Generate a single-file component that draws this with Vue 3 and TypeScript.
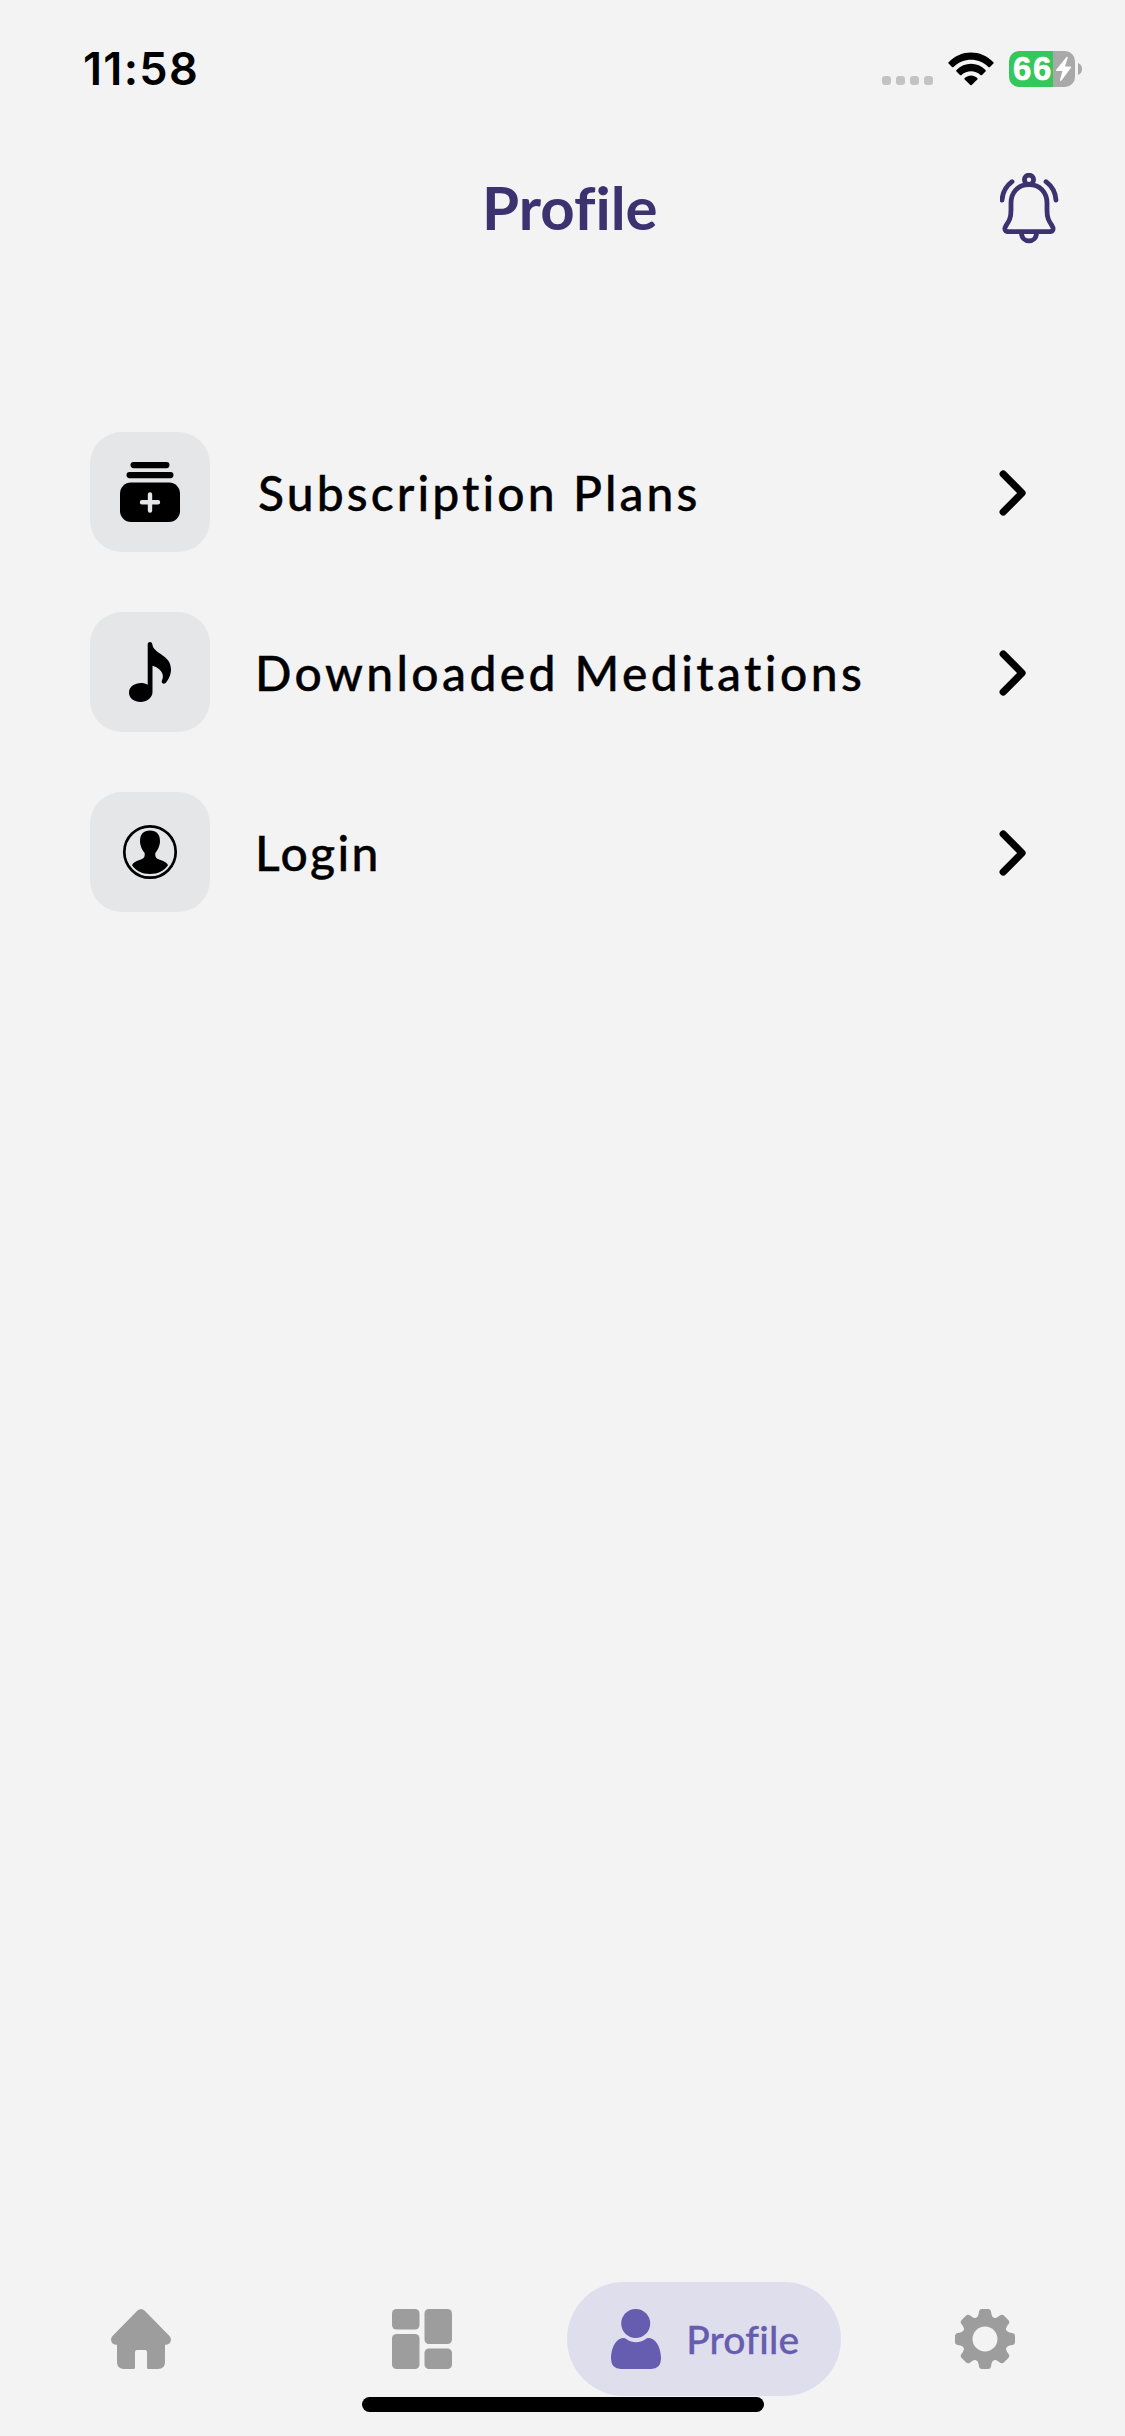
<script setup lang="ts">
interface MenuItem {
  id: 'plans' | 'downloads' | 'login'
  label: string
}

const menu: MenuItem[] = [
  { id: 'plans', label: 'Subscription Plans' },
  { id: 'downloads', label: 'Downloaded Meditations' },
  { id: 'login', label: 'Login' },
]
</script>

<template>
  <div class="screen">
    <header class="status">
      <span class="time">11:58</span>
      <div class="indicators">
        <div class="dots"><i v-for="n in 4" :key="n"></i></div>
        <svg class="wifi" width="46" height="34" viewBox="0 0 46 34">
          <path d="M0.6 10.2C13 -2.8 33 -2.8 45.4 10.2Q46 11 45.4 11.6L42 15Q41.2 15.7 40.4 15C30.5 5.4 15.5 5.4 5.6 15Q4.8 15.7 4 15L0.6 11.6Q0 11 0.6 10.2Z" />
          <path d="M8.5 18C16.5 9.8 29.5 9.8 37.5 18Q38.2 18.8 37.5 19.5L34 23Q33.3 23.6 32.5 23C27 18 19 18 13.5 23Q12.7 23.6 12 23L8.5 19.5Q7.8 18.8 8.5 18Z" />
          <path d="M16.7 26C20.3 22.6 25.7 22.6 29.3 26Q30 26.8 29.3 27.5L23.7 33Q23 33.6 22.3 33L16.7 27.5Q16 26.8 16.7 26Z" />
        </svg>
        <div class="battery">
          <div class="cell">
            <span>66</span>
            <svg width="17" height="26" viewBox="0 0 17 26"><path d="M11.5 1L1 14Q0.5 15 1.5 15H7.5L5 24Q5 25.6 6.5 24.6L16 11.7Q16.5 10.5 15.3 10.5H10L12.7 2Q12.8 0.3 11.5 1Z" fill="#fff" /></svg>
          </div>
          <svg class="nub" width="4" height="12" viewBox="0 0 4 12"><path d="M0 0Q4 1.5 4 6T0 12Z" fill="#a9a9a9" /></svg>
        </div>
      </div>
    </header>

    <div class="titlebar">
      <h1>Profile</h1>
      <svg class="bell" width="60" height="72" viewBox="0.5 0.8 60 72" fill="none" stroke="#3c3270" stroke-width="4.8" stroke-linecap="round" stroke-linejoin="round">
        <circle cx="29.5" cy="7.5" r="4.6" />
        <path d="M29.5 12.5C18.5 12.5 11.5 20 11.5 31V38C11.5 46 9.5 49 6.5 53.5C4 57.5 6 59.5 9.5 59.5H49.5C53 59.5 55 57.5 52.5 53.5C49.5 49 47.5 46 47.5 38V31C47.5 20 40.5 12.5 29.5 12.5Z" />
        <path d="M22 60.5C22 71.5 37 71.5 37 60.5M12.5 9.5C6.5 14 3 20.5 2.5 28M46.5 9.5C52.5 14 56 20.5 56.5 28" />
      </svg>
    </div>

    <main class="menu">
      <div v-for="item in menu" :key="item.id" class="row">
        <div class="tile">
          <svg v-if="item.id === 'plans'" width="60" height="60" viewBox="0 0 60 60">
            <rect x="10.5" y="0" width="39" height="6.2" rx="3.1" />
            <rect x="6.5" y="10" width="47" height="6.2" rx="3.1" />
            <rect x="0" y="20.5" width="60" height="39.5" rx="11" />
            <path d="M30 32.5V48.5M22 40.2H38" stroke="#e4e6e8" stroke-width="4.4" stroke-linecap="round" />
          </svg>
          <svg v-else-if="item.id === 'downloads'" width="60" height="60" viewBox="0 0 60 60">
            <path d="M27.7 2.2C27.7 -0.7 32.2 -0.7 32.3 2.2C33.5 12.5 51 12 51 27.5C51 33.5 48 38.5 45.3 41.3C43 42.6 40.7 40.6 42.2 37.7C45 31 39 25.5 32.5 23.7V50C32.5 56 26.5 60 20.5 60C14.5 60 9 56.5 9 50.5C9 44.5 15 41 21 41C23.5 41 26 41.7 27.7 42.7Z" />
          </svg>
          <svg v-else width="60" height="60" viewBox="0 0 60 60">
            <circle cx="30" cy="30" r="25.7" fill="none" stroke="#000" stroke-width="2.7" />
            <path d="M30 8.5C36.5 8.5 40 12.5 40 19C40 24 37.5 28.5 35.3 31C35 36 36.5 36.5 40.5 38C44.5 39.5 47 40.5 48 43.3C44 49 38 52 30 52S16 49 12 43.3C13 40.5 15.5 39.5 19.5 38C23.5 36.5 25 36 24.7 31C22.5 28.5 20 24 20 19C20 12.5 23.5 8.5 30 8.5Z" />
          </svg>
        </div>
        <span class="label" :class="item.id">{{ item.label }}</span>
        <svg class="chevron" width="28" height="46" viewBox="0 0 28 46"><path d="M4.2 4L23 23L4.2 42" fill="none" stroke="#000" stroke-width="7.2" stroke-linecap="round" stroke-linejoin="round" /></svg>
      </div>
    </main>

    <nav class="tabs">
      <div class="tab">
        <svg width="60" height="60" viewBox="0 0 60 60" fill="#9d9d9d"><path d="M26.5 1.5Q30 -1.5 33.5 1.5L58.5 27C61.5 30.5 59.5 35.5 55 35.7H54V53Q54 60 47 60H37.5Q36 60 36 58.5V43Q36 41 34 41H26Q24 41 24 43V58.5Q24 60 22.5 60H13Q6 60 6 53V35.7H5C0.5 35.5 -1.5 30.5 1.5 27Z" /></svg>
      </div>
      <div class="tab">
        <svg width="60" height="60" viewBox="0 0 60 60" fill="#9d9d9d"><rect width="27.5" height="20.5" rx="4.5" /><rect y="25" width="27.5" height="35" rx="4.5" /><rect x="32.5" width="27.5" height="35" rx="4.5" /><rect x="32.5" y="39.5" width="27.5" height="20.5" rx="4.5" /></svg>
      </div>
      <div class="tab shifted">
        <div class="pill">
          <svg width="50" height="60" viewBox="0 0 50 60" fill="#665cb0"><circle cx="24.7" cy="14.5" r="14.5" /><path d="M10.5 29.3Q13.5 28.5 16 30.5C21.5 34 28.5 34 34 30.5Q36.5 28.5 39.5 29.3C46.5 31 50 41 50 49.5Q50 60 40 60H10Q0 60 0 49.5C0 41 3.5 31 10.5 29.3Z" /></svg>
          <span>Profile</span>
        </div>
      </div>
      <div class="tab shifted">
        <svg width="60" height="60" viewBox="0 0 60 60">
          <g fill="#9d9d9d">
            <path v-for="a in 8" :key="a" :transform="`rotate(${a * 45} 30 30)`" d="M20 9.5Q23 8.5 23.5 5.5L23.9 3Q24.3 0 27 0H33Q35.7 0 36.1 3L36.5 5.5Q37 8.5 40 9.5L38 24H22Z" />
          </g>
          <circle cx="30" cy="30" r="17.3" fill="none" stroke="#9d9d9d" stroke-width="9.6" />
          <circle cx="30" cy="30" r="12.5" fill="#f3f3f3" />
        </svg>
      </div>
    </nav>
    <div class="home-bar"></div>
  </div>
</template>

<style>
body {
  margin: 0;
  background: #f3f3f3;
}
</style>

<style scoped>
.screen {
  width: 1125px;
  height: 2436px;
  display: flex;
  flex-direction: column;
  background: #f3f3f3;
  color: #000;
  font-family: Lato, "Open Sans", sans-serif;
  font-variant-ligatures: none;
  overflow: hidden;
}
svg {
  display: block;
  flex: none;
}
.status {
  height: 138px;
  box-sizing: border-box;
  padding: 0 43px 0 83px;
  display: flex;
  justify-content: space-between;
  align-items: center;
}
.time {
  font: 600 45px/60px Inter, sans-serif;
  letter-spacing: 1.3px;
}
.indicators {
  display: flex;
  align-items: center;
}
.dots {
  display: flex;
  gap: 5px;
  margin: 23px 15px 0 0;
}
.dots i {
  width: 9px;
  height: 9px;
  border-radius: 3px;
  background: #c3c3c3;
}
.battery {
  display: flex;
  align-items: center;
  gap: 3px;
  margin-left: 15px;
}
.cell {
  width: 66px;
  height: 36px;
  box-sizing: border-box;
  padding-left: 4px;
  border-radius: 10px;
  display: flex;
  align-items: center;
  background: linear-gradient(90deg, #34c759 44px, #a9a9a9 44px);
}
.cell span {
  width: 42px;
  color: #fff;
  font: 700 33px/36px "Liberation Sans", sans-serif;
  letter-spacing: 1.6px;
  -webkit-text-stroke: 0.6px currentColor;
}
.titlebar {
  height: 142px;
  display: grid;
  grid-template-columns: 482px 1fr 125px;
  align-items: center;
}
h1 {
  grid-column: 2;
  margin: 0 0 4px;
  color: #3c3270;
  font-size: 60px;
  line-height: 80px;
  font-weight: 700;
}
.menu {
  flex: 1;
  padding: 152px 98px 0 90px;
  display: flex;
  flex-direction: column;
  gap: 60px;
}
.row {
  height: 120px;
  display: flex;
  align-items: center;
}
.tile {
  width: 120px;
  height: 120px;
  border-radius: 32px;
  background: #e4e6e8;
  display: flex;
  align-items: center;
  justify-content: center;
}
.label {
  flex: 1;
  padding: 1px 0 0 45px;
  font-size: 48px;
  line-height: 60px;
  font-weight: 500;
  -webkit-text-stroke: 0.4px currentColor;
  white-space: nowrap;
}
.plans {
  padding-left: 48px;
  letter-spacing: 3.1px;
}
.downloads {
  letter-spacing: 3.4px;
}
.login {
  letter-spacing: 2.4px;
}
.chevron {
  margin-top: 1px;
}
.tabs {
  height: 114px;
  display: grid;
  grid-template-columns: repeat(4, 1fr);
}
.tab {
  display: flex;
  align-items: center;
  justify-content: center;
}
.shifted {
  padding-left: 2px;
}
.pill {
  width: 274px;
  height: 114px;
  box-sizing: border-box;
  padding-left: 44px;
  border-radius: 57px;
  display: flex;
  align-items: center;
  gap: 25px;
  background: #dfdeed;
  color: #665cb0;
  font-size: 39px;
  font-weight: 500;
  letter-spacing: 0.2px;
  -webkit-text-stroke: 0.3px currentColor;
}
.home-bar {
  width: 402px;
  height: 15px;
  margin: 1px auto 24px;
  border-radius: 8px;
  background: #000;
}
</style>
